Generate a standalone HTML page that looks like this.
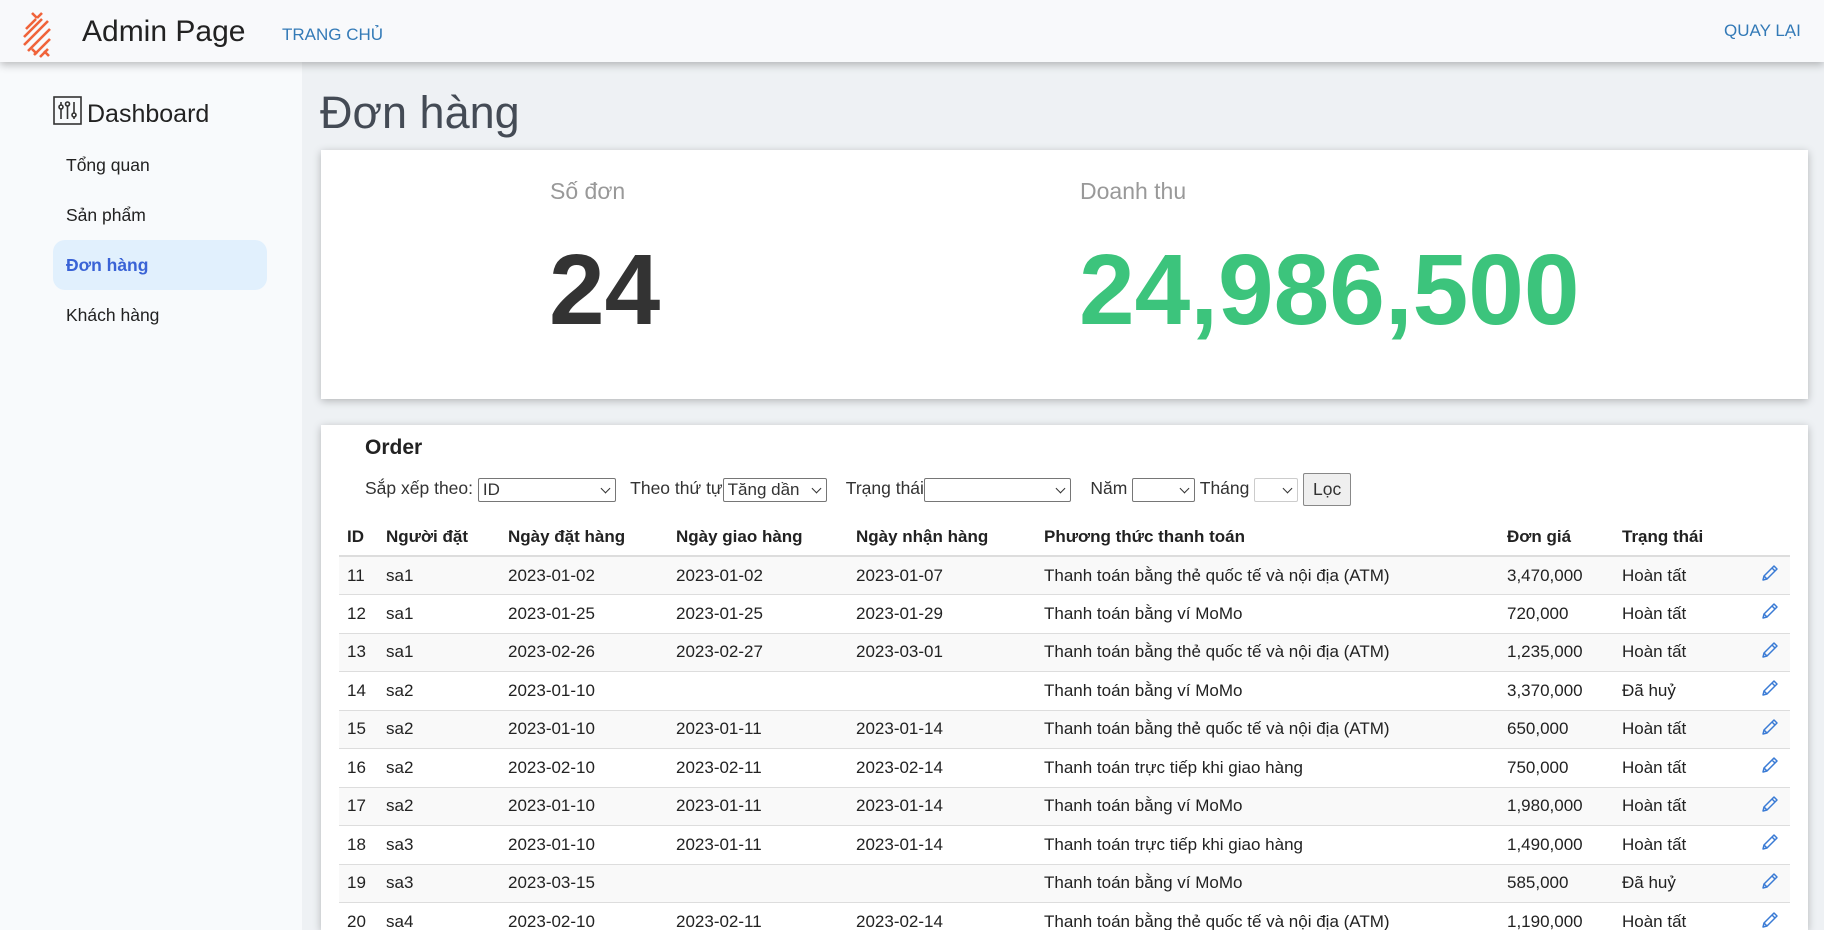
<!DOCTYPE html>
<html><head><meta charset="utf-8"><style>
*{box-sizing:border-box;margin:0;padding:0}
html{width:1824px;height:930px;overflow:hidden}
body{width:1824px;height:930px;overflow:hidden;font-family:"Liberation Sans",Arial,sans-serif;background:#eef1f4;position:relative;color:#222}
.hdr{position:absolute;left:0;top:0;width:1824px;height:62px;background:#f8f9fb;box-shadow:0 3px 8px rgba(0,0,0,.25);z-index:3}
.side{position:absolute;left:0;top:62px;width:302px;height:868px;background:#f8fafc;z-index:2}
.abs{position:absolute;white-space:nowrap}
.card{position:absolute;left:321px;width:1487px;background:#fff;box-shadow:0 2px 8px rgba(0,0,0,.25)}
table{position:absolute;left:339px;top:518px;border-collapse:collapse;font-size:17px;width:1451px}
td,th{text-align:left;height:38.5px;padding:0 0 0 8px;white-space:nowrap}
th{font-weight:bold;height:38px;border-bottom:2px solid #ddd}
td{border-top:1px solid #ddd}
tr.o td{background:#f9f9f9}
.sel{display:inline-block;border:1px solid #767676;border-radius:2px;height:24px;vertical-align:middle;position:relative;background:#fff;font-size:17px;line-height:22px;padding-left:4px}
.sel:after{content:"";position:absolute;right:6px;top:6px;width:6px;height:6px;border-right:1.5px solid #333;border-bottom:1.5px solid #333;transform:rotate(45deg)}
.pen{padding-left:12px}
</style></head><body>
<div class="hdr">
<svg class="abs" style="left:22px;top:11px" width="30" height="48" viewBox="0 0 30 48" stroke="#f0633a" stroke-width="2.6" fill="none">
<path d="M10 2l5 5M15 7l5-5M4 18l10-10M2 26l18-18M2 34l24-24M6 40l22-22M12 44l16-16M18 46l8-8M10 38l5 5M22 40l5 5"/></svg>
<div class="abs" style="left:82px;top:15px;font-size:30px;color:#222">Admin Page</div>
<div class="abs" style="left:282px;top:25px;font-size:17px;color:#337ab7">TRANG CHỦ</div>
<div class="abs" style="left:1724px;top:21px;font-size:17px;color:#337ab7">QUAY LẠI</div>
</div>
<div class="side">
<svg class="abs" style="left:53px;top:34px" width="29" height="29" viewBox="0 0 29 29" fill="none" stroke="#333" stroke-width="1.6"><rect x="1" y="1" width="27" height="27"/><path d="M8 6v17M14.5 6v17M21 6v17"/><circle cx="8" cy="11" r="2" fill="#fff"/><circle cx="14.5" cy="8" r="2" fill="#fff"/><circle cx="21" cy="19" r="2" fill="#fff"/></svg>
<div class="abs" style="left:87px;top:38px;font-size:25px;color:#222">Dashboard</div>
<div class="abs" style="left:66px;top:93px;font-size:17.5px">Tổng quan</div>
<div class="abs" style="left:66px;top:143px;font-size:17.5px">Sản phẩm</div>
<div class="abs" style="left:53px;top:178px;width:214px;height:50px;border-radius:12px;background:#e1f0fd"></div>
<div class="abs" style="left:66px;top:193px;font-size:17.5px;font-weight:bold;color:#3a63d6">Đơn hàng</div>
<div class="abs" style="left:66px;top:243px;font-size:17.5px">Khách hàng</div>
</div>
<div class="abs" style="left:320px;top:87px;font-size:45px;color:#444b55">Đơn hàng</div>
<div class="card" style="top:150px;height:249px">
<div class="abs" style="left:229px;top:28px;font-size:23px;color:#999">Số đơn</div>
<div class="abs" style="left:228px;top:83px;font-size:100px;font-weight:bold;color:#333">24</div>
<div class="abs" style="left:759px;top:28px;font-size:23px;color:#999">Doanh thu</div>
<div class="abs" style="left:758px;top:83px;font-size:100px;font-weight:bold;color:#3cc47c">24,986,500</div>
</div>
<div class="card" style="top:425px;height:505px"></div>
<div class="abs" style="left:365px;top:436px;font-size:21px;font-weight:bold">Order</div>
<div class="abs" style="left:365px;top:473px;font-size:17.5px;color:#333">Sắp xếp theo: <span class="sel" style="width:138px">ID</span>&nbsp;&nbsp; Theo thứ tự<span class="sel" style="width:104px">Tăng dần</span>&nbsp;&nbsp;&nbsp; Trạng thái<span class="sel" style="width:147px"></span>&nbsp;&nbsp;&nbsp; Năm <span class="sel" style="width:63px"></span> Tháng <span class="sel" style="width:44px;border-color:#ccc"></span> <span style="display:inline-block;vertical-align:middle;height:33px;width:48px;border:1px solid #888;background:#efefef;border-radius:2px;text-align:center;line-height:31px">Lọc</span></div>
<svg width="0" height="0" style="position:absolute"><defs><symbol id="p" viewBox="0 0 18 18"><path d="M2 16l1-4L13 2l3 3L6 15z M11 4l3 3 M3 12l3 3" fill="none" stroke="#3a7bd5" stroke-width="1.5" stroke-linejoin="round"/></symbol></defs></svg>
<table>
<colgroup><col style="width:39px"><col style="width:122px"><col style="width:168px"><col style="width:180px"><col style="width:188px"><col style="width:463px"><col style="width:115px"><col style="width:135px"><col></colgroup>
<tr><th>ID</th><th>Người đặt</th><th>Ngày đặt hàng</th><th>Ngày giao hàng</th><th>Ngày nhận hàng</th><th>Phương thức thanh toán</th><th>Đơn giá</th><th>Trạng thái</th><th></th></tr>
<tr class="o"><td>11</td><td>sa1</td><td>2023-01-02</td><td>2023-01-02</td><td>2023-01-07</td><td>Thanh toán bằng thẻ quốc tế và nội địa (ATM)</td><td>3,470,000</td><td>Hoàn tất</td><td class="pen"><svg width="18" height="18"><use href="#p"/></svg></td></tr>
<tr><td>12</td><td>sa1</td><td>2023-01-25</td><td>2023-01-25</td><td>2023-01-29</td><td>Thanh toán bằng ví MoMo</td><td>720,000</td><td>Hoàn tất</td><td class="pen"><svg width="18" height="18"><use href="#p"/></svg></td></tr>
<tr class="o"><td>13</td><td>sa1</td><td>2023-02-26</td><td>2023-02-27</td><td>2023-03-01</td><td>Thanh toán bằng thẻ quốc tế và nội địa (ATM)</td><td>1,235,000</td><td>Hoàn tất</td><td class="pen"><svg width="18" height="18"><use href="#p"/></svg></td></tr>
<tr><td>14</td><td>sa2</td><td>2023-01-10</td><td></td><td></td><td>Thanh toán bằng ví MoMo</td><td>3,370,000</td><td>Đã huỷ</td><td class="pen"><svg width="18" height="18"><use href="#p"/></svg></td></tr>
<tr class="o"><td>15</td><td>sa2</td><td>2023-01-10</td><td>2023-01-11</td><td>2023-01-14</td><td>Thanh toán bằng thẻ quốc tế và nội địa (ATM)</td><td>650,000</td><td>Hoàn tất</td><td class="pen"><svg width="18" height="18"><use href="#p"/></svg></td></tr>
<tr><td>16</td><td>sa2</td><td>2023-02-10</td><td>2023-02-11</td><td>2023-02-14</td><td>Thanh toán trực tiếp khi giao hàng</td><td>750,000</td><td>Hoàn tất</td><td class="pen"><svg width="18" height="18"><use href="#p"/></svg></td></tr>
<tr class="o"><td>17</td><td>sa2</td><td>2023-01-10</td><td>2023-01-11</td><td>2023-01-14</td><td>Thanh toán bằng ví MoMo</td><td>1,980,000</td><td>Hoàn tất</td><td class="pen"><svg width="18" height="18"><use href="#p"/></svg></td></tr>
<tr><td>18</td><td>sa3</td><td>2023-01-10</td><td>2023-01-11</td><td>2023-01-14</td><td>Thanh toán trực tiếp khi giao hàng</td><td>1,490,000</td><td>Hoàn tất</td><td class="pen"><svg width="18" height="18"><use href="#p"/></svg></td></tr>
<tr class="o"><td>19</td><td>sa3</td><td>2023-03-15</td><td></td><td></td><td>Thanh toán bằng ví MoMo</td><td>585,000</td><td>Đã huỷ</td><td class="pen"><svg width="18" height="18"><use href="#p"/></svg></td></tr>
<tr><td>20</td><td>sa4</td><td>2023-02-10</td><td>2023-02-11</td><td>2023-02-14</td><td>Thanh toán bằng thẻ quốc tế và nội địa (ATM)</td><td>1,190,000</td><td>Hoàn tất</td><td class="pen"><svg width="18" height="18"><use href="#p"/></svg></td></tr>
</table>
</body></html>
